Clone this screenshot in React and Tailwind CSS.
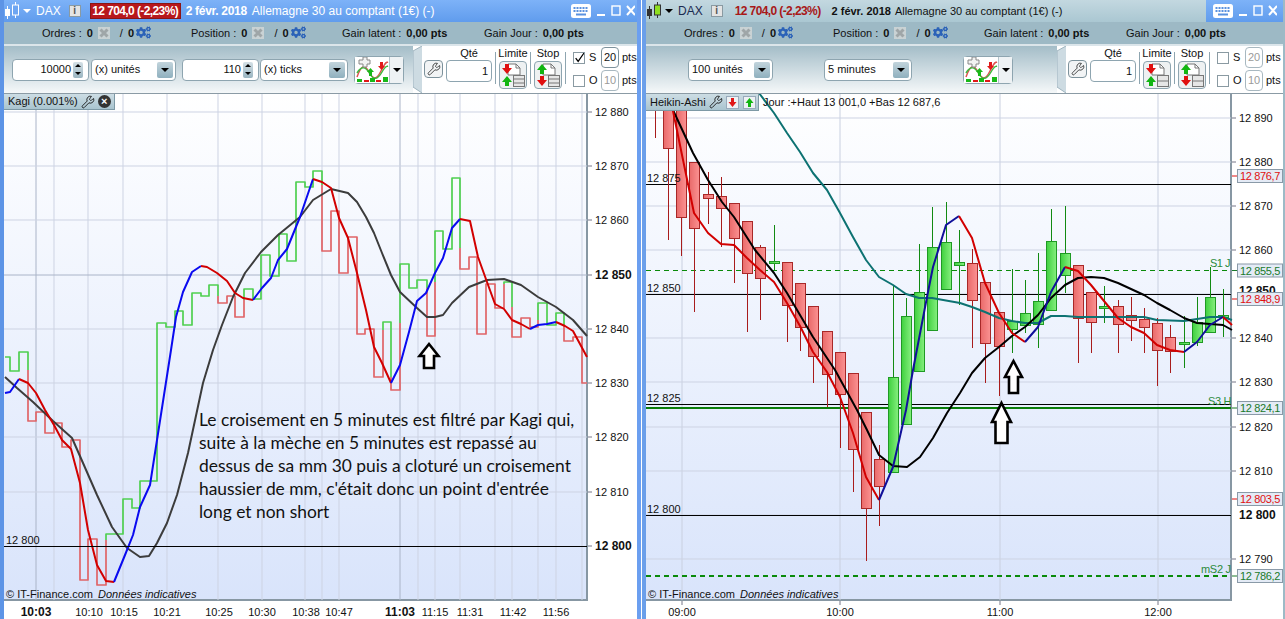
import React from "react";
import { Wrench } from "lucide-react";
import { FaCogs } from "react-icons/fa";

const pts = (a) => a.map((p) => p.join(",")).join(" ");
const Line = ({ p, c, w = 2 }) => (
  <polyline points={pts(p)} fill="none" stroke={c} strokeWidth={w} strokeLinejoin="round" strokeLinecap="butt" />
);

const G = "#4fcf50";
const R = "#e06467";
const kagi = [
  [G, [[5,357],[10,357],[10,371],[19,371],[19,352],[28,352],[28,370]]],
  [R, [[28,370],[28,421],[36,421],[36,412],[45,412],[45,433],[54,433],[54,423],[62,423],[62,447],[71,447],[71,440],[80,440],[80,580],[88,580],[88,539],[97,539],[97,585],[106,585],[106,540]]],
  [G, [[106,540],[106,534],[123,534],[123,499],[132,499],[132,508],[140,508],[140,481],[157,481],[157,323],[166,323],[166,327],[175,327],[175,311],[183,311],[183,325],[192,325],[192,293],[201,293],[201,296],[209,296],[209,285],[218,285],[218,296]]],
  [R, [[218,296],[218,303],[227,303],[227,296],[235,296],[235,317],[244,317],[244,300]]],
  [G, [[244,300],[244,289],[253,289],[253,299],[261,299],[261,255],[270,255],[270,276],[279,276],[279,234],[287,234],[287,261],[296,261],[296,182],[305,182],[305,187],[313,187],[313,171],[322,171],[322,185]]],
  [R, [[322,185],[322,251],[331,251],[331,211],[339,211],[339,273],[348,273],[348,237],[357,237],[357,334],[365,334],[365,329],[374,329],[374,377],[383,377],[383,330]]],
  [G, [[383,330],[383,322],[391,322],[391,377]]],
  [R, [[391,377],[391,390],[400,390],[400,323]]],
  [G, [[400,323],[400,264],[409,264],[409,288],[417,288],[417,280],[427,280],[427,288]]],
  [R, [[427,288],[427,336],[435,336],[435,282]]],
  [G, [[435,282],[435,231],[443,231],[443,249],[452,249],[452,178],[460,178],[460,248]]],
  [R, [[460,248],[460,269],[469,269],[469,257],[477,257],[477,334],[486,334],[486,284],[495,284],[495,308],[504,308],[504,284]]],
  [G, [[504,284],[504,282],[512,282],[512,307]]],
  [R, [[512,307],[512,337],[521,337],[521,318],[530,318],[530,327],[538,327],[538,320]]],
  [G, [[538,320],[538,303],[547,303],[547,325],[556,325],[556,313],[564,313],[564,325]]],
  [R, [[564,325],[564,341],[573,341],[573,337],[582,337],[582,383],[587,383]]],
];
const BL = "#0a0af0";
const RD = "#d20000";
const leftMA = [
  [BL, [[5,393],[10,392],[19,379]]],
  [RD, [[19,379],[28,383],[36,393],[45,410],[54,425],[62,440],[71,449],[80,483],[88,530],[97,565],[106,581],[114,582]]],
  [BL, [[114,582],[125,555],[133,535],[140,507],[150,485],[157,440],[171,350],[176,317],[183,292],[192,272],[201,266]]],
  [RD, [[201,266],[207,267],[217,273],[227,281],[235,293],[243,298],[253,300]]],
  [BL, [[253,300],[262,288],[271,278],[278,260],[287,249],[300,217],[313,179]]],
  [RD, [[313,179],[322,182],[331,188],[339,218],[348,238],[357,273],[366,310],[374,347],[382,363],[391,383]]],
  [BL, [[391,383],[400,365],[409,332],[417,301],[426,293],[435,273],[443,258],[452,228],[460,219]]],
  [RD, [[460,219],[470,221],[478,257],[487,282],[495,304],[504,309],[512,320],[521,324],[530,329]]],
  [BL, [[530,329],[538,325],[547,324],[556,322]]],
  [RD, [[556,322],[565,326],[573,331],[587,357]]],
];
const leftBlack = [[5,377],[17,388],[33,402],[53,421],[72,438],[83,463],[97,495],[112,527],[127,548],[140,557],[149,556],[157,543],[167,523],[177,495],[188,453],[203,383],[213,350],[222,325],[233,297],[245,273],[261,252],[278,235],[300,217],[313,200],[331,189],[348,193],[357,202],[366,217],[374,233],[382,253],[391,275],[400,292],[417,308],[427,317],[435,317],[443,315],[452,303],[469,287],[487,280],[504,279],[521,285],[538,297],[556,307],[573,320],[587,336]];

// x, wickTop, wickBot, bodyTop, bodyBot, colour
const candles = [
  [655,94,138,0,0,"r"],[668,94,240,110,148,"r"],[681,94,256,110,217,"r"],[694,162,312,162,228,"r"],[708,172,224,194,198,"r"],[721,177,247,196,208,"r"],[734,203,283,203,238,"r"],[747,221,332,221,273,"r"],[760,245,320,247,278,"r"],[774,225,270,261,263,"g"],[787,262,342,262,305,"r"],[800,283,351,283,327,"r"],[813,306,383,306,356,"r"],[827,331,407,331,374,"r"],[840,352,448,352,394,"r"],[853,373,492,373,449,"r"],[866,412,561,412,508,"r"],[879,445,526,459,486,"r"],[893,286,472,377,472,"g"],[906,298,424,316,424,"g"],[919,244,371,292,371,"g"],[932,207,330,247,330,"g"],[946,202,289,242,289,"g"],[959,230,305,262,265,"g"],[972,249,348,263,300,"r"],[985,282,383,282,343,"r"],[999,312,396,312,346,"r"],[1012,269,353,321,329,"g"],[1025,280,333,313,325,"g"],[1038,253,348,301,324,"g"],[1051,209,310,241,310,"g"],[1065,206,293,253,275,"g"],[1078,265,363,265,318,"r"],[1091,292,353,292,322,"r"],[1104,286,323,306,306,"g"],[1118,300,353,306,324,"r"],[1131,297,341,315,320,"r"],[1144,308,353,319,327,"r"],[1157,318,386,323,350,"r"],[1170,325,373,337,351,"r"],[1184,316,368,342,344,"g"],[1197,297,346,322,342,"g"],[1210,267,332,297,332,"g"],[1223,289,337,315,315,"g"],
];
const DB = "#10109a";
const rightMA = [
  [RD, [[673,111],[682,155],[694,213],[708,233],[721,244],[734,245],[747,258],[760,270],[774,282],[787,303],[800,326],[813,352],[827,372],[840,397],[853,433],[866,477],[879,500]]],
  [DB, [[879,500],[893,467],[906,410],[913,370],[927,297],[933,267],[946,225],[959,216]]],
  [RD, [[959,216],[972,238],[985,283],[999,313],[1012,333],[1025,342]]],
  [DB, [[1025,342],[1038,327],[1051,292],[1065,267]]],
  [RD, [[1065,267],[1078,271],[1091,285],[1104,301],[1118,318],[1131,327],[1144,333],[1157,345],[1170,350],[1184,352]]],
  [DB, [[1184,352],[1197,342],[1210,325],[1223,317]]],
  [RD, [[1223,317],[1232,325]]],
];
const rightBlack = [[673,110],[693,153],[708,180],[722,202],[734,217],[755,250],[774,273],[787,293],[813,337],[835,370],[857,410],[867,430],[879,455],[893,466],[907,467],[920,457],[933,438],[947,413],[960,393],[972,373],[985,358],[999,347],[1012,336],[1025,327],[1038,315],[1051,298],[1065,285],[1078,278],[1091,277],[1104,278],[1118,283],[1144,295],[1157,303],[1170,310],[1184,318],[1197,323],[1210,324],[1223,325],[1232,330]];
const teal = [[759,93],[774,113],[787,133],[800,152],[813,173],[827,190],[840,213],[853,237],[866,260],[879,277],[893,285],[906,294],[919,298],[932,298],[960,303],[972,307],[985,312],[999,318],[1012,321],[1025,323],[1038,323],[1051,316],[1065,316],[1078,317],[1104,317],[1144,317],[1157,320],[1184,321],[1197,319],[1210,317],[1223,317],[1232,320]];

const Arrow = ({ x, tip, wing, bottom, hw, sw }) => (
  <polygon
    points={pts([[x,tip],[x+hw,wing],[x+sw,wing],[x+sw,bottom],[x-sw,bottom],[x-sw,wing],[x-hw,wing]])}
    fill="#fff" stroke="#000" strokeWidth="2.6"
  />
);

const Tick = ({ x, y, t, bold, fill = "#111", size = 11, ls = 0 }) => (
  <text x={x} y={y} fontSize={size} fontWeight={bold ? 700 : 400} fill={fill} letterSpacing={ls}>{t}</text>
);

function LeftOverlay() {
  const hs = [112,166,220,275,329,383,437,492];
  const vs = [54,88,123,167,218,262,305,322,339,418,435,460,495,512,538,556,582];
  const yl = [[112,"12 880"],[166,"12 870"],[220,"12 860"],[329,"12 840"],[383,"12 830"],[437,"12 820"],[492,"12 810"]];
  const tl = [[89,"10:10"],[124,"10:15"],[167,"10:21"],[219,"10:25"],[262,"10:30"],[306,"10:38"],[339,"10:47"],[435,"11:15"],[470,"11:31"],[513,"11:42"],[556,"11:56"]];
  return (
    <svg viewBox="4 94 633 525" className="absolute inset-0 h-full w-full">
      {vs.map((x) => <line key={x} x1={x} x2={x} y1="94" y2="600" stroke="#cdd3e3" />)}
      {[36,400].map((x) => <line key={x} x1={x} x2={x} y1="94" y2="600" stroke="#aab4c8" />)}
      {hs.map((y) => <line key={y} x1="4" x2="587" y1={y} y2={y} stroke={y === 275 ? "#aab4c8" : "#cdd3e3"} />)}
      {kagi.map(([c, p], i) => <Line key={i} p={p} c={c} w={1.7} />)}
      <Line p={leftBlack} c="#3c3c3c" w={2} />
      {leftMA.map(([c, p], i) => <Line key={i} p={p} c={c} w={2} />)}
      <line x1="4" x2="587" y1="546.5" y2="546.5" stroke="#000" />
      <Tick x={6} y={544} t="12 800" />
      <Arrow x={429} tip={344} wing={356} bottom={368} hw={9.5} sw={5} />
      {[...yl, [275], [546]].map(([y]) => <line key={y} x1="588" x2="592" y1={y} y2={y} stroke="#778" />)}
      {yl.map(([y, t]) => <Tick key={y} x={595} y={y + 4} t={t} />)}
      <Tick x={595} y={279} t="12 850" bold size={12} />
      <Tick x={595} y={550} t="12 800" bold size={12} />
      {tl.map(([x, t]) => <text key={x} x={x} y={616} fontSize="11" textAnchor="middle" fill="#111">{t}</text>)}
      <text x={36} y={616} fontSize="12" fontWeight="700" textAnchor="middle" fill="#111">10:03</text>
      <text x={400} y={616} fontSize="12" fontWeight="700" textAnchor="middle" fill="#111">11:03</text>
    </svg>
  );
}

function Tag({ y, t, c }) {
  return (
    <g>
      <line x1="1232" x2="1237" y1={y} y2={y} stroke={c} />
      <rect x="1237.5" y={y - 6.5} width="45" height="13" fill="#e4ebf6" stroke="#8a9aa8" />
      <text x="1240" y={y + 4} fontSize="11" fill={c} letterSpacing="-0.35">{t}</text>
    </g>
  );
}

function RightOverlay() {
  const hs = [118,162,206,250,338,382,427,471,559];
  const yl = [[118,"12 890"],[162,"12 880"],[206,"12 870"],[250,"12 860"],[338,"12 840"],[382,"12 830"],[427,"12 820"],[471,"12 810"],[559,"12 790"]];
  return (
    <svg viewBox="646 94 637 525" className="absolute inset-0 h-full w-full">
      <defs>
        <linearGradient id="cr" x1="0" x2="1" y1="0" y2="0"><stop offset="0" stopColor="#e96a6a" /><stop offset="1" stopColor="#fb9292" /></linearGradient>
        <linearGradient id="cg" x1="0" x2="1" y1="0" y2="0"><stop offset="0" stopColor="#3fd03f" /><stop offset="1" stopColor="#86ef7f" /></linearGradient>
      </defs>
      {[682,840,1000,1158].map((x) => <line key={x} x1={x} x2={x} y1="94" y2="600" stroke="#c9d0e0" />)}
      {[...hs, 294, 515].map((y) => <line key={y} x1="646" x2="1231" y1={y} y2={y} stroke="#cdd3e3" />)}
      <line x1="646" x2="1231" y1="270.5" y2="270.5" stroke="#0a8a0a" strokeDasharray="5 4" />
      <line x1="646" x2="1231" y1="576" y2="576" stroke="#0a8a0a" strokeWidth="2" strokeDasharray="5 4" />
      <line x1="646" x2="1231" y1="184.5" y2="184.5" stroke="#000" />
      <line x1="646" x2="1231" y1="294.5" y2="294.5" stroke="#000" />
      <line x1="646" x2="1231" y1="404.5" y2="404.5" stroke="#000" />
      <line x1="646" x2="1231" y1="408" y2="408" stroke="#0a7d0a" strokeWidth="2" />
      <line x1="646" x2="1231" y1="515.5" y2="515.5" stroke="#000" />
      {candles.map(([x, a, b, t, e, c]) => (
        <g key={x}>
          <line x1={x + 0.5} x2={x + 0.5} y1={a} y2={b} stroke={c === "r" ? "#a81c1c" : "#128a12"} />
          {e > 0 && (
            <rect x={x - 4.5} y={t + 0.5} width="10" height={Math.max(e - t, 2)} fill={c === "r" ? "url(#cr)" : "url(#cg)"} stroke={c === "r" ? "#a82828" : "#1f9a24"} />
          )}
        </g>
      ))}
      <Line p={teal} c="#0d7272" w={2} />
      <Line p={rightBlack} c="#000" w={2} />
      {rightMA.map(([c, p], i) => <Line key={i} p={p} c={c} w={2} />)}
      <Arrow x={1013.5} tip={361} wing={377} bottom={393} hw={8.5} sw={4.5} />
      <Arrow x={1001.5} tip={403} wing={422} bottom={443} hw={9.5} sw={6} />
      <Tick x={647} y={182} t="12 875" />
      <Tick x={647} y={292} t="12 850" />
      <Tick x={647} y={402} t="12 825" />
      <Tick x={647} y={513} t="12 800" />
      <Tick x={1210} y={267} t="S1 J" fill="#2a8a3a" ls={-0.5} />
      <Tick x={1208} y={405} t="S3 H" fill="#2a8a3a" ls={-0.3} />
      <Tick x={1201} y={573} t="mS2 J" fill="#2a8a3a" ls={-0.3} />
      {yl.map(([y]) => <line key={y} x1="1232" x2="1236" y1={y} y2={y} stroke="#778" />)}
      {yl.map(([y, t]) => <Tick key={y} x={1239} y={y + 4} t={t} />)}
      <Tick x={1239} y={295} t="12 850" bold size={12} />
      <Tick x={1239} y={519} t="12 800" bold size={12} />
      <Tag y={176} t="12 876,7" c="#e01010" />
      <Tag y={270.5} t="12 855,5" c="#1a7a2a" />
      <Tag y={299} t="12 848,9" c="#e01010" />
      <Tag y={408} t="12 824,1" c="#1a7a2a" />
      <Tag y={499} t="12 803,5" c="#e01010" />
      <Tag y={576} t="12 786,2" c="#1a7a2a" />
      {[[682,"09:00"],[840,"10:00"],[1000,"11:00"],[1158,"12:00"]].map(([x, t]) => (
        <g key={x}>
          <line x1={x} x2={x} y1="601" y2="605" stroke="#778" />
          <text x={x} y={616} fontSize="11" textAnchor="middle" fill="#111">{t}</text>
        </g>
      ))}
    </svg>
  );
}

const CandleIcon = ({ fill, line }) => (
  <svg width="16" height="20" viewBox="0 0 16 20" className="shrink-0">
    <line x1="3.5" x2="3.5" y1="5" y2="18" stroke={line} />
    <rect x="1" y="8" width="5" height="7" fill={line} />
    <line x1="11.5" x2="11.5" y1="1" y2="17" stroke={line} />
    <rect x="8.5" y="4" width="6" height="10" fill={fill} stroke={line} />
  </svg>
);

const InfoIcon = () => (
  <div className="flex h-[12px] w-[12px] items-center justify-center border border-[#8a9aa2] bg-[#e4e4e4] text-[10px] leading-none font-bold text-[#555]">i</div>
);

const Keyboard = () => (
  <svg width="20" height="14" viewBox="0 0 20 14">
    <rect width="20" height="14" rx="2.5" fill="#fff" />
    {[2.5,5.5,8.5,11.5,14.5].map((x) => <rect key={x} x={x} y="3" width="2" height="2" fill="#5a92e0" />)}
    {[2.5,5.5,8.5,11.5,14.5].map((x) => <rect key={x} x={x} y="6" width="2" height="2" fill="#5a92e0" />)}
    <rect x="5" y="9.5" width="10" height="2" fill="#5a92e0" />
  </svg>
);

const WinButtons = () => (
  <svg width="38" height="12" viewBox="0 0 38 12" className="ml-[6px]">
    <rect x="0" y="9" width="8" height="2" fill="#fff" />
    <rect x="15" y="1" width="8" height="9" fill="none" stroke="#fff" strokeWidth="1.4" />
    <path d="M30 1 L38 10 M38 1 L30 10" stroke="#fff" strokeWidth="2" />
  </svg>
);

const GreyX = () => (
  <svg width="12" height="12" viewBox="0 0 12 12" className="ml-[5px] shrink-0">
    <rect width="12" height="12" fill="#c9d2d4" />
    <path d="M2.5 2.5 L9.5 9.5 M9.5 2.5 L2.5 9.5" stroke="#9fa6a8" strokeWidth="3" />
  </svg>
);

const OrderCell = ({ label, w }) => (
  <div className={`flex items-center ${w}`}>
    <span>{label}</span>
    <b className="ml-[5px]">0</b>
    <GreyX />
    <span className="ml-[10px]">/</span>
    <b className="ml-[5px]">0</b>
    <FaCogs className="ml-[2px] -mt-[2px] text-[15px] text-[#2b62b8]" />
  </div>
);

const InfoBar = () => (
  <div className="flex h-[24px] items-center border-b-2 border-[#dbe5ea] bg-[#9db9c5] pl-[38px] text-[11px] text-[#111]">
    <OrderCell label="Ordres :" w="w-[149px]" />
    <OrderCell label="Position :" w="w-[151px]" />
    <div className="flex w-[142px] items-center"><span>Gain latent :</span><b className="ml-[5px]">0,00 pts</b></div>
    <div className="flex items-center"><span>Gain Jour :</span><b className="ml-[5px]">0,00 pts</b></div>
  </div>
);

const Field = ({ value }) => (
  <div className="flex h-[22px] w-[77px] items-center justify-end rounded-[4px] border border-[#8ea5b0] bg-white pr-[5px] text-[11px] text-[#111]">
    <span>{value}</span>
    <div className="ml-[2px] flex h-[16px] w-[10px] flex-col items-center justify-around rounded-[2px] bg-gradient-to-b from-[#d4e0e6] to-[#9ab5c1]">
      <span className="h-0 w-0 border-x-[3px] border-b-[3px] border-x-transparent border-b-black" />
      <span className="h-0 w-0 border-x-[3px] border-t-[3px] border-x-transparent border-t-black" />
    </div>
  </div>
);

const Select = ({ label, w }) => (
  <div className={`flex h-[22px] items-center justify-between rounded-[4px] border border-[#8ea5b0] bg-white pr-[2px] pl-[3px] text-[11px] text-[#111] ${w}`}>
    <span>{label}</span>
    <div className="flex h-[16px] w-[16px] items-center justify-center rounded-[2px] bg-gradient-to-b from-[#c2d4dc] to-[#8fb0be]">
      <span className="h-0 w-0 border-x-[4px] border-t-[4px] border-x-transparent border-t-black" />
    </div>
  </div>
);

const ChartIcon = () => (
  <svg width="33" height="26" viewBox="0 0 33 26">
    <path d="M1 20 C6 6 9 8 13 15 S20 24 25 14 S30 6 32 5" fill="none" stroke="#e05050" strokeWidth="1.5" />
    <path d="M1 16 C6 8 10 10 14 17 S22 22 26 15 S30 10 32 9" fill="none" stroke="#3fb83f" strokeWidth="1.5" />
    <path d="M3 3 H7 V0 H11 V3 H14 V7 H11 V10 H7 V7 H3 Z" fill="#f2f2f2" stroke="#888" />
    <path d="M13 19 L13 15 L11 15 L14.5 11 L18 15 L16 15 L16 19 Z" fill="#18b818" />
    <path d="M24 5 L24 9 L22 9 L25.5 13 L29 9 L27 9 L27 5 Z" fill="#e01818" />
    <rect x="1" y="22" width="5" height="3" fill="#18b818" />
    <rect x="8" y="23" width="5" height="2" fill="#e01818" />
    <rect x="14" y="21" width="5" height="4" fill="#18b818" />
    <rect x="20" y="23" width="5" height="2" fill="#e01818" />
    <rect x="27" y="20" width="5" height="5" fill="#18b818" />
  </svg>
);

const ChartButton = ({ ml }) => (
  <div className={`flex h-[28px] w-[50px] rounded-[4px] border border-[#8ea5b0] bg-white ${ml}`}>
    <div className="flex w-[35px] items-center justify-center border-r border-[#b4c4cc] bg-white pl-px"><ChartIcon /></div>
    <div className="flex flex-1 items-center justify-center bg-[#eef2f4]">
      <span className="h-0 w-0 border-x-[4px] border-t-[4px] border-x-transparent border-t-black" />
    </div>
  </div>
);

const OrderIcon = ({ upFirst, rows }) => (
  <svg width="26" height="24" viewBox="0 0 26 24">
    <path d="M8 1 H16 L20 5 V12 H8 Z" fill="#fff" stroke="#777" />
    <path d="M16 1 V5 H20" fill="none" stroke="#777" />
    <path d={upFirst ? "M2 7 L7 1 L12 7 H9 V11 H5 V7 Z" : "M5 1 H9 V5 H12 L7 11 L2 5 H5 Z"} fill={upFirst ? "#12b512" : "#e01010"} />
    <path d={upFirst ? "M5 13 H9 V17 H12 L7 23 L2 17 H5 Z" : "M2 19 L7 13 L12 19 H9 V23 H5 V19 Z"} fill={upFirst ? "#e01010" : "#12b512"} />
    <rect x="13.5" y="12.5" width="11" height="11" fill="#e6e6e6" stroke="#777" />
    {rows === 3 ? (
      <>
        <line x1="14" x2="24" y1="16" y2="16" stroke="#777" />
        <line x1="14" x2="24" y1="20" y2="20" stroke="#777" />
      </>
    ) : (
      <line x1="14" x2="24" y1="18" y2="18" stroke="#777" />
    )}
  </svg>
);

const BigBtn = ({ upFirst, rows }) => (
  <div className="flex h-[28px] w-[28px] items-center justify-center rounded-[4px] border border-[#8ea5b0] bg-[#eef1f2]">
    <OrderIcon upFirst={upFirst} rows={rows} />
  </div>
);

const Divider = () => <div className="mx-[3px] mt-[6px] h-[32px] w-px shrink-0 bg-[#8ea5b0]" />;

const CheckRow = ({ label, value, checked, active }) => (
  <div className="flex h-[21px] items-center">
    <div className="flex h-[12px] w-[12px] items-center justify-center border border-[#8a9aa2] bg-white">
      {checked && <svg width="12" height="12" viewBox="0 0 12 12"><path d="M2 6 L5 10 L12 0" fill="none" stroke="#000" strokeWidth="1.5" /></svg>}
    </div>
    <span className="ml-[4px] w-[12px]">{label}</span>
    <div className={`flex h-[21px] w-[18px] items-center justify-center rounded-[4px] border bg-white ${active ? "border-[#7d929c] text-[#111]" : "border-[#a8b8c0] text-[#9a9a9a]"}`}>{value}</div>
    <span className="ml-[3px]">pts</span>
  </div>
);

const Panel = ({ sl, rows, w }) => (
  <div className={`ml-auto flex h-[47px] shrink-0 bg-white text-[11px] text-[#111] ${w}`}>
    <svg width="9" height="47" viewBox="0 0 9 47" className="absolute shrink-0">
      <path d="M9 0 L0 5 V41 L9 47" fill="#cddbe2" stroke="#9fb4bf" />
    </svg>
    <div className="flex h-full w-[11px] items-center justify-end pr-[6px] pl-[2px]">
      <span className="mb-px h-0 w-0 border-y-[4px] border-l-[4px] border-y-transparent border-l-black" />
    </div>
    <div className="mt-[14px] flex h-[18px] w-[19px] items-center justify-center self-start rounded-[4px] border border-[#7d929c] bg-[#f2f4f5]">
      <Wrench size={14} strokeWidth={1.4} className="text-[#222]" />
    </div>
    <div className="ml-[3px] flex w-[46px] flex-col items-center">
      <span className="h-[14px] leading-[14px]">Qté</span>
      <div className="flex h-[22px] w-full items-center justify-end rounded-[4px] border border-[#8ea5b0] pr-[3px]">1</div>
    </div>
    <Divider />
    <div className="flex w-[28px] flex-col items-center">
      <span className="h-[15px] leading-[14px]">Limite</span>
      <BigBtn upFirst={false} rows={rows} />
    </div>
    <Divider />
    <div className="flex w-[28px] flex-col items-center">
      <span className="h-[15px] leading-[14px]">Stop</span>
      <BigBtn upFirst rows={rows} />
    </div>
    <Divider />
    <div className="ml-[4px] flex flex-col gap-[2px] pt-px">
      <CheckRow label="S" value="20" checked={sl} active={sl} />
      <CheckRow label="O" value="10" />
    </div>
  </div>
);

const Plot = ({ w }) => (
  <div className={`h-[507px] border-r-2 border-b-2 border-[#8797a3] bg-gradient-to-b from-white to-[#d9e4fb] ${w}`} />
);

function Window({ title, toolbar, overlay, plotW, outer, sl, rows, panelW, children }) {
  return (
    <div className={`flex h-[619px] shrink-0 flex-col ${outer}`}>
      {title}
      <InfoBar />
      <div className="flex h-[47px] items-center bg-gradient-to-b from-[#a4bdc8] to-[#f5f8f9]">
        {toolbar}
        <Panel sl={sl} rows={rows} w={panelW} />
      </div>
      <div className="relative flex-1 border-t border-[#8b9ba5] bg-white">
        <Plot w={plotW} />
        {overlay}
        {children}
      </div>
    </div>
  );
}

const Footer = ({ x }) => (
  <div className={`absolute top-[493px] flex text-[11px] leading-[14px] text-[#111] ${x}`}>
    <span>© IT-Finance.com</span>
    <i className="ml-[5px]">Données indicatives</i>
  </div>
);

const note = [
  "Le croisement en 5 minutes est filtré par Kagi qui,",
  "suite à la mèche en 5 minutes est repassé au",
  "dessus de sa mm 30 puis a cloturé un croisement",
  "haussier de mm, c'était donc un point d'entrée",
  "long et non short",
];

export default function App() {
  return (
    <div className="flex h-[619px] w-[1285px] overflow-hidden bg-white font-['Liberation_Sans',Arial,sans-serif]">
      <Window
        outer="w-[641px] border-x-4 border-l-[#5d94e6] border-r-[#6b9ff0]"
        plotW="w-[584px]"
        panelW="w-[224px]"
        sl
        rows={3}
        title={
          <div className="flex h-[22px] items-center bg-gradient-to-b from-[#7db2f8] to-[#609ced] text-[12px] text-white">
            <CandleIcon fill="#6ea6f2" line="#fff" />
            <span className="ml-[3px] h-0 w-0 border-x-[4px] border-t-[4px] border-x-transparent border-t-white" />
            <span className="ml-[5px] text-[12px]">DAX</span>
            <div className="ml-[8px]"><InfoIcon /></div>
            <div className="ml-[9px] flex h-[16px] w-[91px] items-center justify-center border border-[#8a1515] bg-[#b8181c] text-[12px] font-bold tracking-[-0.6px]">12 704,0 (-2,23%)</div>
            <b className="ml-[5px] font-bold tracking-[-0.3px]">2 févr. 2018</b>
            <span className="ml-[5px]">Allemagne 30 au comptant (1€) (-)</span>
            <div className="ml-auto flex items-center pr-[2px]"><Keyboard /><WinButtons /></div>
          </div>
        }
        toolbar={
          <>
            <div className="ml-[8px]"><Field value="10000" /></div>
            <div className="ml-[2px]"><Select label="(x) unités" w="w-[85px]" /></div>
            <div className="ml-[6px]"><Field value="110" /></div>
            <div className="ml-px"><Select label="(x) ticks" w="w-[88px]" /></div>
            <ChartButton ml="ml-[6px]" />
          </>
        }
        overlay={<LeftOverlay />}
      >
        <div className="absolute top-0 left-0 flex h-[16px] w-[111px] items-center border-r border-b border-[#7d99a5] bg-gradient-to-b from-[#cddde4] to-[#a9c4cf] pl-[4px] text-[11px] text-[#111]">
          <span>Kagi (0.001%)</span>
          <Wrench size={14} strokeWidth={1.5} className="ml-[3px]" />
          <span className="ml-[3px] flex h-[13px] w-[13px] items-center justify-center rounded-full bg-[#333] text-[11px] leading-none font-bold text-white">×</span>
        </div>
        <div className="absolute top-[314px] left-[195px] font-['Lato',sans-serif] text-[17.4px] leading-[23px] whitespace-nowrap text-[#111]">
          {note.map((l) => <div key={l}>{l}</div>)}
        </div>
        <Footer x="left-[2px]" />
      </Window>
      <Window
        outer="ml-px w-[643px] border-l-4 border-r-2 border-l-[#6b9fea] border-r-[#9dbac6]"
        plotW="w-[586px]"
        panelW="w-[226px]"
        rows={2}
        title={
          <div className="flex h-[22px] items-center bg-gradient-to-b from-[#c3d8e0] to-[#aac7d2] text-[11px] text-[#111]">
            <CandleIcon fill="#8fe020" line="#333" />
            <span className="ml-[3px] h-0 w-0 border-x-[4px] border-t-[4px] border-x-transparent border-t-black" />
            <span className="ml-[5px] text-[12px] text-[#1a2a50]">DAX</span>
            <div className="ml-[8px]"><InfoIcon /></div>
            <b className="ml-[12px] text-[12px] tracking-[-0.6px] text-[#a81818]">12 704,0 (-2,23%)</b>
            <b className="ml-[11px]">2 févr. 2018</b>
            <span className="ml-[4px]">Allemagne 30 au comptant (1€) (-)</span>
            <div className="ml-auto flex h-full w-[77px] items-center bg-gradient-to-b from-[#7db2f8] to-[#609ced] pl-[7px]"><Keyboard /><WinButtons /></div>
          </div>
        }
        toolbar={
          <>
            <div className="ml-[42px]"><Select label="100 unités" w="w-[85px]" /></div>
            <div className="ml-[51px]"><Select label="5 minutes" w="w-[88px]" /></div>
            <ChartButton ml="ml-[51px]" />
          </>
        }
        overlay={<RightOverlay />}
      >
        <div className="absolute top-0 left-0 flex h-[17px] w-[113px] items-center border-r border-b border-[#7d99a5] bg-gradient-to-b from-[#cddde4] to-[#a9c4cf] pl-[4px] text-[11px] text-[#111]">
          <span>Heikin-Ashi</span>
          <Wrench size={14} strokeWidth={1.5} className="ml-[3px]" />
          <svg width="13" height="13" viewBox="0 0 13 13" className="ml-[3px]"><rect x=".5" y=".5" width="12" height="12" fill="#eef2f4" stroke="#9ab" /><path d="M5 2 H8 V6 H10.5 L6.5 11 L2.5 6 H5 Z" fill="#e01818" /></svg>
          <svg width="13" height="13" viewBox="0 0 13 13" className="ml-[4px]"><rect x=".5" y=".5" width="12" height="12" fill="#eef2f4" stroke="#9ab" /><path d="M5 11 H8 V7 H10.5 L6.5 2 L2.5 7 H5 Z" fill="#12b512" /></svg>
        </div>
        <div className="absolute top-[1px] left-[117px] text-[11px] leading-[14px] whitespace-nowrap text-[#111]">Jour :+Haut 13 001,0 +Bas 12 687,6</div>
        <Footer x="left-[2px]" />
      </Window>
    </div>
  );
}
